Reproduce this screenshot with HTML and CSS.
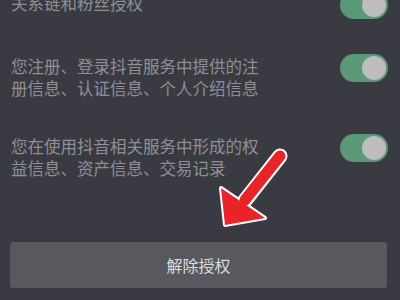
FILE: index.html
```html
<!DOCTYPE html>
<html lang="zh">
  <head>
    <meta charset="UTF-8" />
    <meta name="viewport" content="width=device-width, initial-scale=1.0" />
    <title>授权管理</title>
    <link rel="stylesheet" href="styles.css">
  </head>
  <body>
    <div class="page">
      <div class="list">
        <div class="row">
          <div class="text">关系链和粉丝授权</div>
          <div class="toggle on"><span class="knob"></span></div>
        </div>
        <div class="row">
          <div class="text">您注册、登录抖音服务中提供的注册信息、认证信息、个人介绍信息</div>
          <div class="toggle on"><span class="knob"></span></div>
        </div>
        <div class="row">
          <div class="text">您在使用抖音相关服务中形成的权益信息、资产信息、交易记录</div>
          <div class="toggle on"><span class="knob"></span></div>
        </div>
      </div>

      <button class="btn-revoke">解除授权</button>

      <svg class="arrow" width="400" height="300" viewBox="0 0 400 300">
        <path d="M280 163 L243 210" stroke="#fff" stroke-width="15" stroke-linecap="round" />
        <polygon points="221,195 265,225 225,232" fill="#fff" stroke="#fff" stroke-width="4" stroke-linejoin="round" />
        <path d="M280 163 L245 207" stroke="#e92428" stroke-width="11" stroke-linecap="round" />
        <polygon points="221,195 265,225 225,232" fill="#e92428" />
      </svg>
    </div>
  </body>
</html>
```

FILE: styles.css
```css
* {
  margin: 0;
  padding: 0;
  box-sizing: border-box;
}

body {
  font-family: 'Noto Sans CJK SC', 'Noto Sans', sans-serif;
  background: #393a42;
  width: 400px;
  height: 300px;
  overflow: hidden;
}

.page {
  position: relative;
  height: 300px;
}

.list {
  display: flex;
  flex-direction: column;
  gap: 37px;
  padding: 0 12px 0 11px;
  margin-top: -7px;
}

.row {
  display: flex;
  justify-content: space-between;
  align-items: flex-start;
}

.text {
  width: 252px;
  font-size: 16.5px;
  line-height: 21.5px;
  color: #8f9095;
}

.toggle {
  width: 48px;
  height: 28px;
  border-radius: 14px;
  background: #5a9878;
  margin-top: -2px;
  display: flex;
  align-items: center;
  justify-content: flex-end;
  padding: 0 2px;
}

.knob {
  width: 24px;
  height: 24px;
  border-radius: 50%;
  background: #bdbdc0;
}

.btn-revoke {
  display: block;
  margin: 63px 13px 0 10px;
  width: 377px;
  height: 46px;
  border: none;
  border-radius: 3px;
  background: #58585f;
  color: #dcdcde;
  font-family: inherit;
  font-size: 16px;
}

.arrow {
  position: absolute;
  left: 0;
  top: 0;
  pointer-events: none;
}
```
